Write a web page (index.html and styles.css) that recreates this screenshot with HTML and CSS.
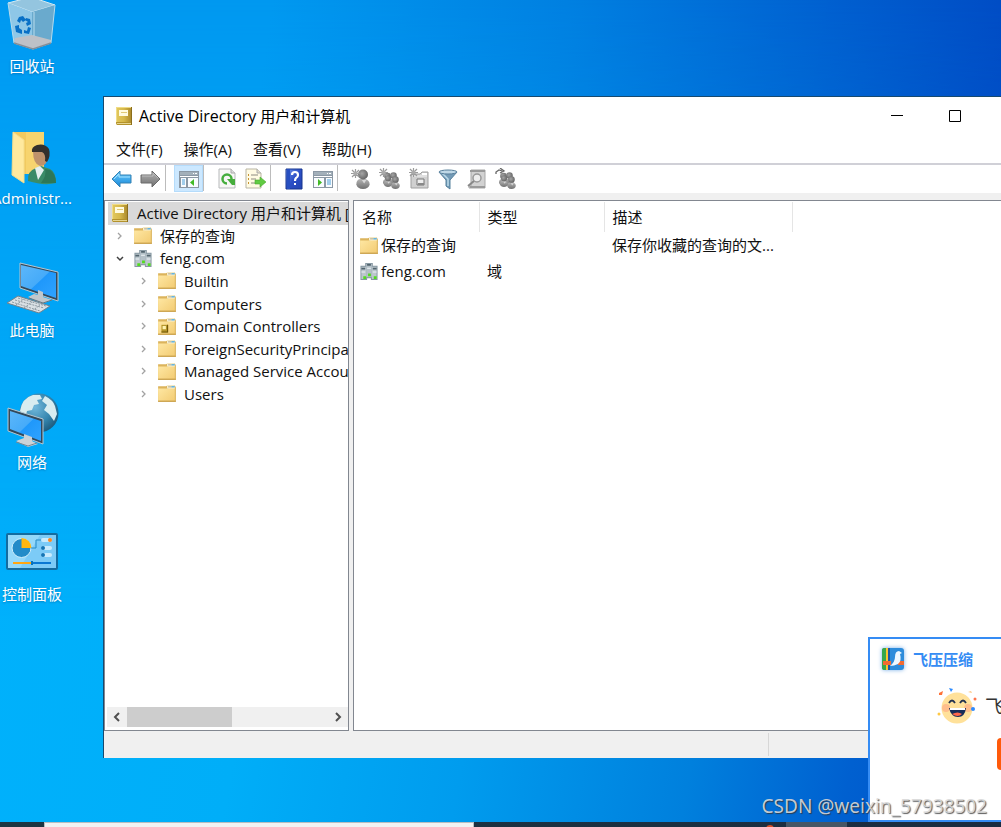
FILE: index.html
```html
<!DOCTYPE html>
<html lang="zh-CN">
<head>
<meta charset="utf-8">
<meta name="viewport" content="width=device-width, initial-scale=1">
<title>Active Directory 用户和计算机</title>
<link rel="stylesheet" href="styles.css">
</head>
<body>
<svg class="sprite" aria-hidden="true">
  <defs>
    <linearGradient id="g-gold" x1="0" x2="1" y1="0" y2="0"><stop offset="0" stop-color="#e2c95f"/><stop offset=".5" stop-color="#d6b84a"/><stop offset="1" stop-color="#a8862a"/></linearGradient>
    <linearGradient id="g-folder" x1="0" x2="1" y1="0" y2="1"><stop offset="0" stop-color="#ffe9a6"/><stop offset="1" stop-color="#f3cc74"/></linearGradient>
    <linearGradient id="g-screen" x1="0" x2="1" y1="0" y2="1"><stop offset="0" stop-color="#5cb7fa"/><stop offset=".5" stop-color="#46abf9"/><stop offset=".52" stop-color="#1f98fb"/><stop offset="1" stop-color="#2fa3ff"/></linearGradient>
    <linearGradient id="g-gray" x1="0" x2="0" y1="0" y2="1"><stop offset="0" stop-color="#b4b4b4"/><stop offset="1" stop-color="#707070"/></linearGradient>
    <linearGradient id="g-blue" x1="0" x2="0" y1="0" y2="1"><stop offset="0" stop-color="#6fd0ff"/><stop offset="1" stop-color="#1585d8"/></linearGradient>
    <radialGradient id="g-head" cx=".4" cy=".4" r=".7"><stop offset="0" stop-color="#a5a5a5"/><stop offset="1" stop-color="#5b5b5b"/></radialGradient>
    <radialGradient id="g-globe" cx=".4" cy=".35" r=".7"><stop offset="0" stop-color="#72b9dc"/><stop offset=".6" stop-color="#3585ae"/><stop offset="1" stop-color="#1c5779"/></radialGradient>
    <linearGradient id="g-help" x1="0" x2="1" y1="0" y2="1"><stop offset="0" stop-color="#6f95ee"/><stop offset=".5" stop-color="#2c4fc6"/><stop offset="1" stop-color="#2444b0"/></linearGradient>
  </defs>
  <symbol id="i-book" viewBox="0 0 16 20"><path d="M0 1h16v18H1l-1-2z" fill="url(#g-gold)"/><path d="M0 1v16l1 1V2h15V1z" fill="#f0dc86"/><path d="M0 16h16v3H1q-1-1-1-3z" fill="#b3922c"/><path d="M1 17h14v1H1z" fill="#e6d591"/><path d="M3 4h9v6H3z" fill="#fffbe0"/><path d="M5 6h6v1H5z" fill="#e0ca77"/><path d="M15 1h1v18h-1z" fill="#8b6e1c"/></symbol>
  <symbol id="i-folder" viewBox="0 0 18 17"><path d="M1 2h7l2-1h6l1 2v13H1z" fill="#dcb45c"/><path d="M1 4h9l2-2h4v13H1z" fill="url(#g-folder)"/><path d="M9 1h7v3H9z" fill="#f7efd0"/><path d="M10 2h3v1h-3z" fill="#b9b096"/><path d="M13 2h3v1h-3z" fill="#2f9de6"/><path d="M1 15h16v1H1z" fill="#c9a04c"/></symbol>
  <symbol id="i-folder-dc" viewBox="0 0 18 17"><use href="#i-folder"/><path d="M4 7h6v7H4z" fill="#b49428"/><path d="M5 8h3v3H5z" fill="#fff3b0"/><path d="M9 7h1v7H4v-1h5z" fill="#715709"/></symbol>
  <symbol id="i-domain" viewBox="0 0 20 20"><path d="M6 1h8v16H6zM1 4h7v15H1zM12 4h7v15h-7z" fill="#8697a1"/><path d="M7 2h6v14H7z" fill="#b4c0c7"/><path d="M2 5h5v13H2zM13 5h5v13h-5z" fill="#bcc7cd"/><path d="M8 2h4v2H8zM2 6h4v2H2zM14 6h4v2h-4z" fill="#52646e"/><path d="M8 6h4v1H8zM2 10h4v1H2zM14 10h4v1h-4z" fill="#eef4f7"/><path d="M9 12h3v3H9zM4 15h3v3H4zM15 15h3v3h-3z" fill="#52dc1f"/></symbol>
  <symbol id="i-right" viewBox="0 0 8 10"><path d="M2 2l3 3-3 3" fill="none" stroke="#a2a2a2" stroke-width="1.3"/></symbol>
  <symbol id="i-down" viewBox="0 0 8 10"><path d="M1 4l3 3 3-3" fill="none" stroke="#404040" stroke-width="1.5"/></symbol>
  <symbol id="i-back" viewBox="0 0 22 22"><path d="M1 11l8-8v4h11v8H9v4z" fill="url(#g-blue)" stroke="#3582b4"/><path d="M3 11l5-5v3h11" fill="none" stroke="#a3e1ff"/></symbol>
  <symbol id="i-forward" viewBox="0 0 22 22"><path d="M20 11l-8-8v4H1v8h11v4z" fill="url(#g-gray)" stroke="#6a6a6a"/><path d="M2 8h11V5l5 5" fill="none" stroke="#bbb"/></symbol>
  <symbol id="i-tree" viewBox="0 0 22 22"><path d="M1 3h20v17H1z" fill="#8b98a4"/><path d="M2 4h18v3H2z" fill="#a3b0ba"/><path d="M15 5h1v1h-1zm2 0h2v1h-2zM2 8h18v1H2z" fill="#fff"/><path d="M3 10h5v9H3zm7 0h10v9H10z" fill="#f9fcff"/><path d="M4 12h3M4 14h3M4 16h3" stroke="#4aa0d9"/><path d="M16 11v7l-4-3.500z" fill="#42ba26"/></symbol>
  <symbol id="i-action" viewBox="0 0 22 22"><path d="M1 3h20v17H1z" fill="#8b98a4"/><path d="M2 4h18v3H2z" fill="#a3b0ba"/><path d="M15 5h1v1h-1zm2 0h2v1h-2zM2 8h18v1H2z" fill="#fff"/><path d="M2 10h10v9H2zm12 0h6v9h-6z" fill="#f9fcff"/><path d="M15 12h4M15 14h4M15 16h4" stroke="#4aa0d9"/><path d="M6 11v7l4-3.500z" fill="#42ba26"/></symbol>
  <symbol id="i-refresh" viewBox="0 0 22 22"><path d="M3 1h12l4 4v15H3z" fill="#f7f7f5" stroke="#b7b9bb"/><path d="M15 1v4h4" fill="#ddd" stroke="#aaa"/><path d="M11 15.500a4.500 4.500 0 1 1 4.500-4.500" fill="none" stroke="#45ad3c" stroke-width="2.500"/><path d="M11 11h8v6h-3z" fill="#45ad3c"/></symbol>
  <symbol id="i-export" viewBox="0 0 22 22"><path d="M1 1h11l4 4v15H1z" fill="#fffbe3" stroke="#b9b5a4"/><path d="M12 1v4h4" fill="#e2decd" stroke="#aaa"/><path d="M3 7h1m-1 4h1m-1 4h1" stroke="#c79132" stroke-width="2"/><path d="M6 7h7M6 11h5M6 15h5" stroke="#8c8b80"/><path d="M10 12h5V9l6 5-6 5v-3h-5z" fill="#61cb43" stroke="#48aa2c" stroke-width=".6"/></symbol>
  <symbol id="i-help" viewBox="0 0 22 22"><path d="M3 1h16v20H3z" fill="url(#g-help)" stroke="#17358e"/><path d="M4 1h3v20H4z" fill="#274fc1"/><path d="M9 7q0-3 3-3t3 3q0 2-2 3-1 1-1 3" fill="none" stroke="#fff" stroke-width="2.200"/><path d="M11 15h2v2h-2z" fill="#fff"/></symbol>
  <symbol id="i-star" viewBox="0 0 9 9"><path d="M4.500 0v9M0 4.500h9M1 1l7 7M8 1L1 8" stroke="#9b9b9b" stroke-width="1.200"/><circle cx="4.500" cy="4.500" r="2" fill="#aaa"/></symbol>
  <symbol id="i-person" viewBox="0 0 12 18"><path d="M0 14q0-5 4-5h4q4 1 4 5-1 4-6 4-5 0-6-4z" fill="url(#g-gray)"/><path d="M5 10l2 3 2-3z" fill="#d7d7d7"/><circle cx="6" cy="5" r="4.500" fill="url(#g-head)"/></symbol>
  <symbol id="i-user" viewBox="0 0 22 22"><use href="#i-person" x="6" y="1" width="14" height="20"/><use href="#i-star" x="1" y="1" width="9" height="9"/></symbol>
  <symbol id="i-pair" viewBox="0 0 22 22"><use href="#i-person" x="4" y="4" width="9" height="14"/><use href="#i-person" x="10" y="4" width="9" height="13"/><use href="#i-person" x="12" y="8" width="9" height="13"/><use href="#i-person" x="5" y="7" width="8" height="12"/></symbol>
  <symbol id="i-group" viewBox="0 0 22 22"><use href="#i-pair"/><use href="#i-star" x="0" y="0" width="9" height="9"/></symbol>
  <symbol id="i-addgroup" viewBox="0 0 22 22"><use href="#i-pair"/><path d="M1 6V4l3-2 3 1M5 0l4 3-4 2" fill="none" stroke="#666" stroke-width="1.300"/></symbol>
  <symbol id="i-ou" viewBox="0 0 22 22"><path d="M3 6h9l2-2h6v16H3z" fill="#d0d0d0" stroke="#a0a0a0"/><path d="M4 8h15" stroke="#f0f0f0"/><path d="M9 11h7v6H9z" fill="#eee" stroke="#777"/><path d="M10 15h6v2h-6z" fill="#888"/><path d="M14 5h5v2h-5z" fill="#fff"/><use href="#i-star" x="1" y="0" width="9" height="9"/></symbol>
  <symbol id="i-filter" viewBox="0 0 22 22"><path d="M2 4l7 8v6l4 3v-9l7-8z" fill="#739bb7" stroke="#57819d"/><path d="M5 5l6 6v7" fill="none" stroke="#bddbea" stroke-width="1.500"/><ellipse cx="11" cy="4" rx="9" ry="2" fill="#bfd8e7" stroke="#577f9b"/></symbol>
  <symbol id="i-find" viewBox="0 0 22 22"><path d="M5 2h14v18H3v-2h2z" fill="#d2d2d2" stroke="#a8a8a8"/><path d="M4 2h15v2H4zm0 16h15v2H4z" fill="#9a9a9a"/><circle cx="11" cy="10" r="4" fill="#eee" stroke="#999" stroke-width="1.500"/><path d="M8 13l-6 5" stroke="#888" stroke-width="2"/></symbol>
</svg>

<main class="desktop">
  <ul class="shortcuts">
    <li><a href="#bin" class="shortcut"><svg class="art" viewBox="0 0 64 52" aria-hidden="true"><path d="M8 3L31-3l24 8-23 7z" fill="#94c5df" stroke="#d3eaf4"/><path d="M8 3l24 9v37L14 43z" fill="#8ec7e7"/><path d="M55 5l-23 7v37l19-6z" fill="#6aaacd"/><path d="M14 43l1-5 17-3 19 5v3l-18 6z" fill="#bec1c7"/><path d="M8 3l6 40 19 6 18-6 4-38M34 12v24" fill="none" stroke="#b7dbec"/><path d="M14 43l19 6 18-6" fill="none" stroke="#858e98" stroke-width="1.500"/><path d="M17 21l2-4 4-1 3 4-3 2-2-2-1 3zM26 18l4 1 1 5-4 2-1-3 2-1-3-2zM31 28l-2 6-5-1v-3l3 1 1-4zM22 34l-6-2-1-6 4-1v3l3 2z" fill="#0870c6"/></svg><span>回收站</span></a></li>
    <li><a href="#admin" class="shortcut"><svg class="art" viewBox="0 0 64 52" aria-hidden="true"><path d="M13 0h31v42H13z" fill="#f1ca60"/><path d="M26 0h18v42H26z" fill="#f7d46e"/><path d="M13 0l11 8v43L12 43z" fill="#ffe99e" stroke="#f5dc8a"/><path d="M28 49q-1-10 8-13l5-2 9 3q6 3 6 14-12 3-28-2z" fill="#3a8b68"/><path d="M35 36l3 12 6-10-4-4z" fill="#e4f0f0"/><path d="M41 51q6-8 4-14l5 1q6 4 6 13z" fill="#2e7757"/><path d="M33 19q0-4 8-4 8 1 7 10-1 9-8 9-7-2-7-15z" fill="#be926c"/><path d="M32 20q-1-5 5-7 8-2 12 4 2 7-2 13l-2-1q1-7-3-9-5 0-10 0z" fill="#34302d"/></svg><span>Administr...</span></a></li>
    <li><a href="#pc" class="shortcut"><svg class="art" viewBox="0 0 64 52" aria-hidden="true"><path d="M20-1l38 9v29l-38-13z" fill="#34495a" stroke="#b6c7d2"/><path d="M21 1l35 8v25L21 22z" fill="url(#g-screen)"/><path d="M28 33l6-3 4 1v-5l5 2v5l9 3-10 4z" fill="#c0c7cc"/><path d="M29 34l14 5 9-3" fill="none" stroke="#647580"/><path d="M7 39l11-7 32 10-11 7z" fill="#d9e0e4" stroke="#71838e"/><path d="M12 38l28 9m-25-11l29 8M18 34l28 8M16 41l8-6m0 9l8-6m0 9l8-6" stroke="#8d9aa2" stroke-dasharray="2 1" fill="none"/></svg><span>此电脑</span></a></li>
    <li><a href="#network" class="shortcut"><svg class="art" viewBox="0 0 64 52" aria-hidden="true"><circle cx="39" cy="17" r="19.500" fill="url(#g-globe)"/><path d="M20 15q2-13 13-16l7 0 2 4-5 1 2 4-5 1-2 5-5 1-1 4-4-1z" fill="#d9edf0"/><path d="M45 0q8 4 10 10l2 8-3 7-5-7-5-4 3-5-5-4z" fill="#d8edf1"/><path d="M8 12l35 11v25L8 35z" fill="#33495b" stroke="#b5c7d3"/><path d="M10 15l31 10v20L10 33z" fill="url(#g-screen)"/><path d="M16 45l8-3v-4l8 3v4l6 3-10 3z" fill="#cbd2d7"/><path d="M16 46l12 4 9-3" fill="none" stroke="#788894"/></svg><span>网络</span></a></li>
    <li><a href="#control" class="shortcut"><svg class="art" viewBox="0 0 64 52" aria-hidden="true"><rect x="7" y="6" width="50" height="35" rx="1" fill="#7ccbf7" stroke="#146ca0" stroke-width="2"/><path d="M8 7h32L20 40H8z" fill="#94d8fa"/><circle cx="21.500" cy="20" r="9.500" fill="#238bc8" stroke="#d1effb"/><path d="M21.500 20V10a10 10 0 0 1 10 10z" fill="#ffb711"/><path d="M31 20h5v-8h6" fill="none" stroke="#268bc6"/><rect x="41" y="10" width="11" height="4" rx="2" fill="#c9ebfd"/><rect x="41" y="18" width="11" height="4" rx="2" fill="#c9ebfd"/><rect x="41" y="25" width="11" height="4" rx="2" fill="#c9ebfd"/><circle cx="50" cy="12" r="2" fill="#ff871d"/><circle cx="43" cy="20" r="2" fill="#1475b5"/><circle cx="43" cy="27" r="2" fill="#1475b5"/><path d="M13 35h18" stroke="#ffa511" stroke-width="2"/><path d="M33 35h18" stroke="#0a78d3" stroke-width="2"/><path d="M31 33h2v4h-2z" fill="#0774bd"/></svg><span>控制面板</span></a></li>
  </ul>

  <section class="window">
    <header class="titlebar">
      <svg class="book" aria-hidden="true"><use href="#i-book"/></svg>
      <h1><span class="latin">Active Directory</span> 用户和计算机</h1>
      <div class="controls">
        <button type="button" aria-label="最小化"><svg viewBox="0 0 12 12"><path d="M0 5.500h12" stroke="#000"/></svg></button>
        <button type="button" aria-label="最大化"><svg viewBox="0 0 12 12"><path d="M.5.500h11v11H.5z" fill="none" stroke="#000"/></svg></button>
      </div>
    </header>
    <nav class="menu">
      <button type="button">文件(F)</button><button type="button">操作(A)</button><button type="button">查看(V)</button><button type="button">帮助(H)</button>
    </nav>
    <div class="toolbar">
      <button type="button" aria-label="后退"><svg><use href="#i-back"/></svg></button>
      <button type="button" aria-label="前进"><svg><use href="#i-forward"/></svg></button>
      <i></i>
      <button type="button" class="on" aria-label="显示控制台树"><svg><use href="#i-tree"/></svg></button>
      <i></i>
      <button type="button" aria-label="刷新"><svg><use href="#i-refresh"/></svg></button>
      <button type="button" aria-label="导出列表"><svg><use href="#i-export"/></svg></button>
      <i></i>
      <button type="button" aria-label="帮助"><svg><use href="#i-help"/></svg></button>
      <button type="button" aria-label="操作窗格"><svg><use href="#i-action"/></svg></button>
      <i></i>
      <button type="button" aria-label="新建用户"><svg><use href="#i-user"/></svg></button>
      <button type="button" aria-label="新建组"><svg><use href="#i-group"/></svg></button>
      <button type="button" aria-label="新建组织单位"><svg><use href="#i-ou"/></svg></button>
      <button type="button" aria-label="筛选"><svg><use href="#i-filter"/></svg></button>
      <button type="button" aria-label="查找"><svg><use href="#i-find"/></svg></button>
      <button type="button" aria-label="添加到组"><svg><use href="#i-addgroup"/></svg></button>
    </div>
    <div class="panes">
      <aside class="pane tree-pane">
        <ul class="tree">
          <li class="root"><svg class="book"><use href="#i-book"/></svg><span>Active Directory 用户和计算机 [</span></li>
          <li class="level1"><svg class="arrow"><use href="#i-right"/></svg><svg class="icon"><use href="#i-folder"/></svg><span>保存的查询</span></li>
          <li class="level1"><svg class="arrow"><use href="#i-down"/></svg><svg class="icon"><use href="#i-domain"/></svg><span>feng.com</span></li>
          <li class="level2"><svg class="arrow"><use href="#i-right"/></svg><svg class="icon"><use href="#i-folder"/></svg><span>Builtin</span></li>
          <li class="level2"><svg class="arrow"><use href="#i-right"/></svg><svg class="icon"><use href="#i-folder"/></svg><span>Computers</span></li>
          <li class="level2"><svg class="arrow"><use href="#i-right"/></svg><svg class="icon"><use href="#i-folder-dc"/></svg><span>Domain Controllers</span></li>
          <li class="level2"><svg class="arrow"><use href="#i-right"/></svg><svg class="icon"><use href="#i-folder"/></svg><span>ForeignSecurityPrincipal</span></li>
          <li class="level2"><svg class="arrow"><use href="#i-right"/></svg><svg class="icon"><use href="#i-folder"/></svg><span>Managed Service Accou</span></li>
          <li class="level2"><svg class="arrow"><use href="#i-right"/></svg><svg class="icon"><use href="#i-folder"/></svg><span>Users</span></li>
        </ul>
        <div class="scrollbar">
          <button type="button" aria-label="向左滚动"><svg viewBox="0 0 8 10"><path d="M6 1L2 5l4 4" fill="none" stroke="#505050" stroke-width="2"/></svg></button>
          <div class="track"><div class="thumb"></div></div>
          <button type="button" aria-label="向右滚动"><svg viewBox="0 0 8 10"><path d="M2 1l4 4-4 4" fill="none" stroke="#505050" stroke-width="2"/></svg></button>
        </div>
      </aside>
      <div class="pane list-pane">
        <table>
          <colgroup><col class="c-name"><col class="c-type"><col class="c-desc"><col></colgroup>
          <thead><tr><th>名称</th><th>类型</th><th>描述</th><td></td></tr></thead>
          <tbody>
            <tr><td><div class="entry"><svg class="icon"><use href="#i-folder"/></svg>保存的查询</div></td><td></td><td>保存你收藏的查询的文...</td><td></td></tr>
            <tr><td><div class="entry"><svg class="icon"><use href="#i-domain"/></svg>feng.com</div></td><td>域</td><td></td><td></td></tr>
          </tbody>
        </table>
      </div>
    </div>
    <footer class="status"><span></span><span></span></footer>
  </section>

  <section class="popup">
    <header><svg viewBox="0 0 24 24" aria-hidden="true"><rect x="1" y="1" width="22" height="22" rx="3" fill="#2d8cdb"/><path d="M3 1h2v22H3q-2 0-2-2V3q0-2 2-2z" fill="#37a84b"/><path d="M5 1h2v22H5z" fill="#ffc42e"/><path d="M7 1h2v22H7z" fill="#1b59a9"/><path d="M2 14h8v4H2zm15 0h6v4h-6z" fill="#f26b32"/><path d="M9 19q5-4 5-9 0-6 4-6l3 2-2 1q2 7-2 10-4 2-8 2z" fill="#eef8ff"/></svg><h2>飞压压缩</h2></header>
    <div class="message"><svg viewBox="0 0 40 38" aria-hidden="true"><circle cx="20" cy="21" r="15.500" fill="#ffe19a"/><circle cx="9" cy="21" r="4" fill="#ffb187" opacity=".75"/><circle cx="31" cy="21" r="4" fill="#ffb187" opacity=".75"/><path d="M12 16q3-5 6 0M23 16q3-5 6 0" fill="none" stroke="#23324e" stroke-width="1.800"/><path d="M12 21h17q-1 9-8 9t-9-9z" fill="#172c58"/><path d="M13 21h15v2H13z" fill="#fff"/><path d="M15 27q6-3 10 0-4 4-10 0z" fill="#ff674b"/><path d="M2 6l4-2-1 4H2z" fill="#ff7036"/><path d="M12 1l4 1-2 3z" fill="#2c8bff"/><path d="M31 5l3-1 1 2z" fill="#ffc782"/><circle cx="38" cy="12" r="1.500" fill="#ff754d"/><circle cx="36" cy="22" r="2" fill="#2c8bff"/><circle cx="2" cy="27" r="1.500" fill="#ffc844"/></svg><p>飞</p></div>
    <button type="button" class="cta" aria-label="确定"></button>
  </section>

  <footer class="taskbar"><input type="search" aria-label="搜索"><span class="badge"></span><span class="task"></span></footer>
  <p class="watermark">CSDN @weixin_57938502</p>
</main>
</body>
</html>
```
FILE: styles.css
```css
* { box-sizing: border-box; }
body, h1, h2, p, ul { margin: 0; padding: 0; }
body { font: 15px/20px "Open Sans", "Noto Sans CJK SC", sans-serif; color: #111; }
ul { list-style: none; }
button { padding: 0; border: 0; background: none; font: inherit; color: inherit; }
svg { display: block; flex: none; }
.sprite { position: absolute; width: 0; height: 0; }

.desktop {
  position: relative;
  display: flex;
  flex-direction: column;
  justify-content: space-between;
  height: 100vh;
  overflow: hidden;
  background:
    linear-gradient(100deg, #00b2fd 0, #00aef8 32%, #009cee 52%, #0080dd 72%, #0060d0 86%, #004dc6 100%);
}
.desktop::before {
  content: "";
  position: absolute;
  inset: 0 0 auto;
  height: 620px;
  background: linear-gradient(98deg, #0098f0 0, #0098f0 25%, #0080e1 52%, #0060d0 76%, #0048c2 96%);
  -webkit-mask-image: linear-gradient(#000 0, rgba(0, 0, 0, .8) 96px, transparent 100%);
  mask-image: linear-gradient(#000 0, rgba(0, 0, 0, .8) 96px, transparent 100%);
}

.shortcuts { position: relative; display: grid; grid-template-columns: 64px; gap: 56px; width: 64px; }
.shortcut { display: flex; flex-direction: column; align-items: center; gap: 4px; color: #fff; text-decoration: none; white-space: nowrap; text-shadow: 0 1px 2px rgba(0, 50, 100, .35); }
.art { width: 64px; height: 52px; overflow: visible; }

.window {
  position: absolute;
  inset: 96px 0 69px 103px;
  display: flex;
  flex-direction: column;
  border: solid #164a70;
  border-width: 1px 0 0 1px;
  background: #f0f0f0;
}
.titlebar { display: flex; align-items: center; height: 37px; padding-left: 12px; background: #fff; color: #000; }
.titlebar h1 { margin-left: 7px; font-size: 15px; font-weight: 400; line-height: 20px; }
.latin { font-size: 16px; }
.book { width: 16px; height: 20px; }
.controls { display: flex; margin-left: auto; }
.controls button { display: grid; place-items: center; width: 58px; height: 38px; }
.controls button:last-child { margin-right: 17px; }
.controls svg { width: 12px; height: 12px; }
.menu { display: flex; gap: 21px; height: 29px; padding-left: 12px; background: #fff; }
.toolbar { display: flex; height: 30px; padding: 0 0 2px 3px; border-top: 2px solid #d0d0d7; background: #fff; }
.toolbar button { display: grid; place-items: center; width: 29px; height: 27px; }
.toolbar button.on { background: #cce8ff; outline: 1px solid #b5dcfb; outline-offset: -1px; }
.toolbar svg { width: 22px; height: 22px; }
.toolbar i { width: 9px; border-left: 1px solid #bcbcbc; }

.panes { flex: 1; display: flex; gap: 4px; min-height: 0; padding-top: 7px; }
.pane { min-width: 0; background: #fff; border: 1px solid #828790; overflow: hidden; }
.tree-pane { flex: none; display: flex; flex-direction: column; justify-content: space-between; width: 245px; padding: 1px 0 3px 2px; }
.tree { display: flex; flex-direction: column; height: 203px; }
.tree li { flex: 1; display: flex; align-items: center; white-space: nowrap; }
.tree .root { gap: 9px; margin-left: 1px; padding-left: 4px; background: #d9d9d9; }
.level1 { padding-left: 9px; }
.level2 { padding-left: 33px; }
.arrow { width: 8px; height: 10px; margin-right: 9px; }
.icon { width: 20px; height: 19px; }
.tree .icon { margin-right: 7px; }
.scrollbar { display: flex; height: 20px; background: #f0f0f0; }
.scrollbar button { display: grid; place-items: center; width: 20px; }
.scrollbar svg { width: 8px; height: 10px; }
.track { flex: 1; }
.thumb { width: 52%; height: 20px; background: #cdcdcd; }

.list-pane { flex: 1; border-right: 0; padding-top: 1px; }
table { width: 100%; table-layout: fixed; border-collapse: collapse; }
.c-name { width: 125px; }
.c-type { width: 125px; }
.c-desc { width: 188px; }
th, td { padding: 0 8px; text-align: left; font-weight: 400; white-space: nowrap; }
th { height: 30px; border-right: 1px solid #e5e5e5; }
tbody td { height: 26px; }
.entry { display: flex; align-items: center; gap: 2px; margin-left: -3px; }
.status { display: flex; height: 27px; padding: 2px 0; }
.status span { flex: 1; }
.status span:last-child { flex: 0 0 233px; border-left: 1px solid #d7d7d7; }

.popup { position: absolute; right: 0; bottom: 5px; width: 133px; height: 185px; overflow: hidden; background: #fff; border: 2px solid #358cf4; border-right: 0; }
.popup header { display: flex; align-items: center; gap: 8px; padding: 8px 0 0 11px; }
.popup header svg { width: 24px; height: 24px; filter: drop-shadow(0 0 2px #78aee8); }
.popup h2 { font-size: 15px; line-height: 24px; color: #358cf4; white-space: nowrap; }
.message { display: flex; align-items: center; gap: 8px; padding: 16px 0 0 67px; }
.message svg { width: 40px; height: 38px; }
.message p { flex: none; font-size: 18px; line-height: 24px; color: #333; }
.cta { display: block; width: 90px; height: 32px; margin: 13px 0 0 127px; border-radius: 4px; background: #ff5a0a; }

.taskbar { position: relative; display: flex; height: 5px; overflow: hidden; background: linear-gradient(90deg, #1e3541, #1b2c40); }
.taskbar input { width: 430px; height: 5px; margin: 0 0 0 44px; padding: 0; border: 1px solid #b8bdc0; border-bottom: 0; background: #f2f2f2; }
.badge { width: 8px; height: 8px; margin: 3px 0 0 292px; border-radius: 50%; background: #d9512b; }
.task { width: 61px; margin-left: 12px; background: #465665; }
.watermark { position: absolute; right: 14px; bottom: 8px; font-family: "Noto Sans", sans-serif; font-size: 19px; line-height: 26px; color: rgba(218, 218, 218, .9); text-shadow: 1px 1px 1px rgba(50, 50, 50, .8); pointer-events: none; }
```
